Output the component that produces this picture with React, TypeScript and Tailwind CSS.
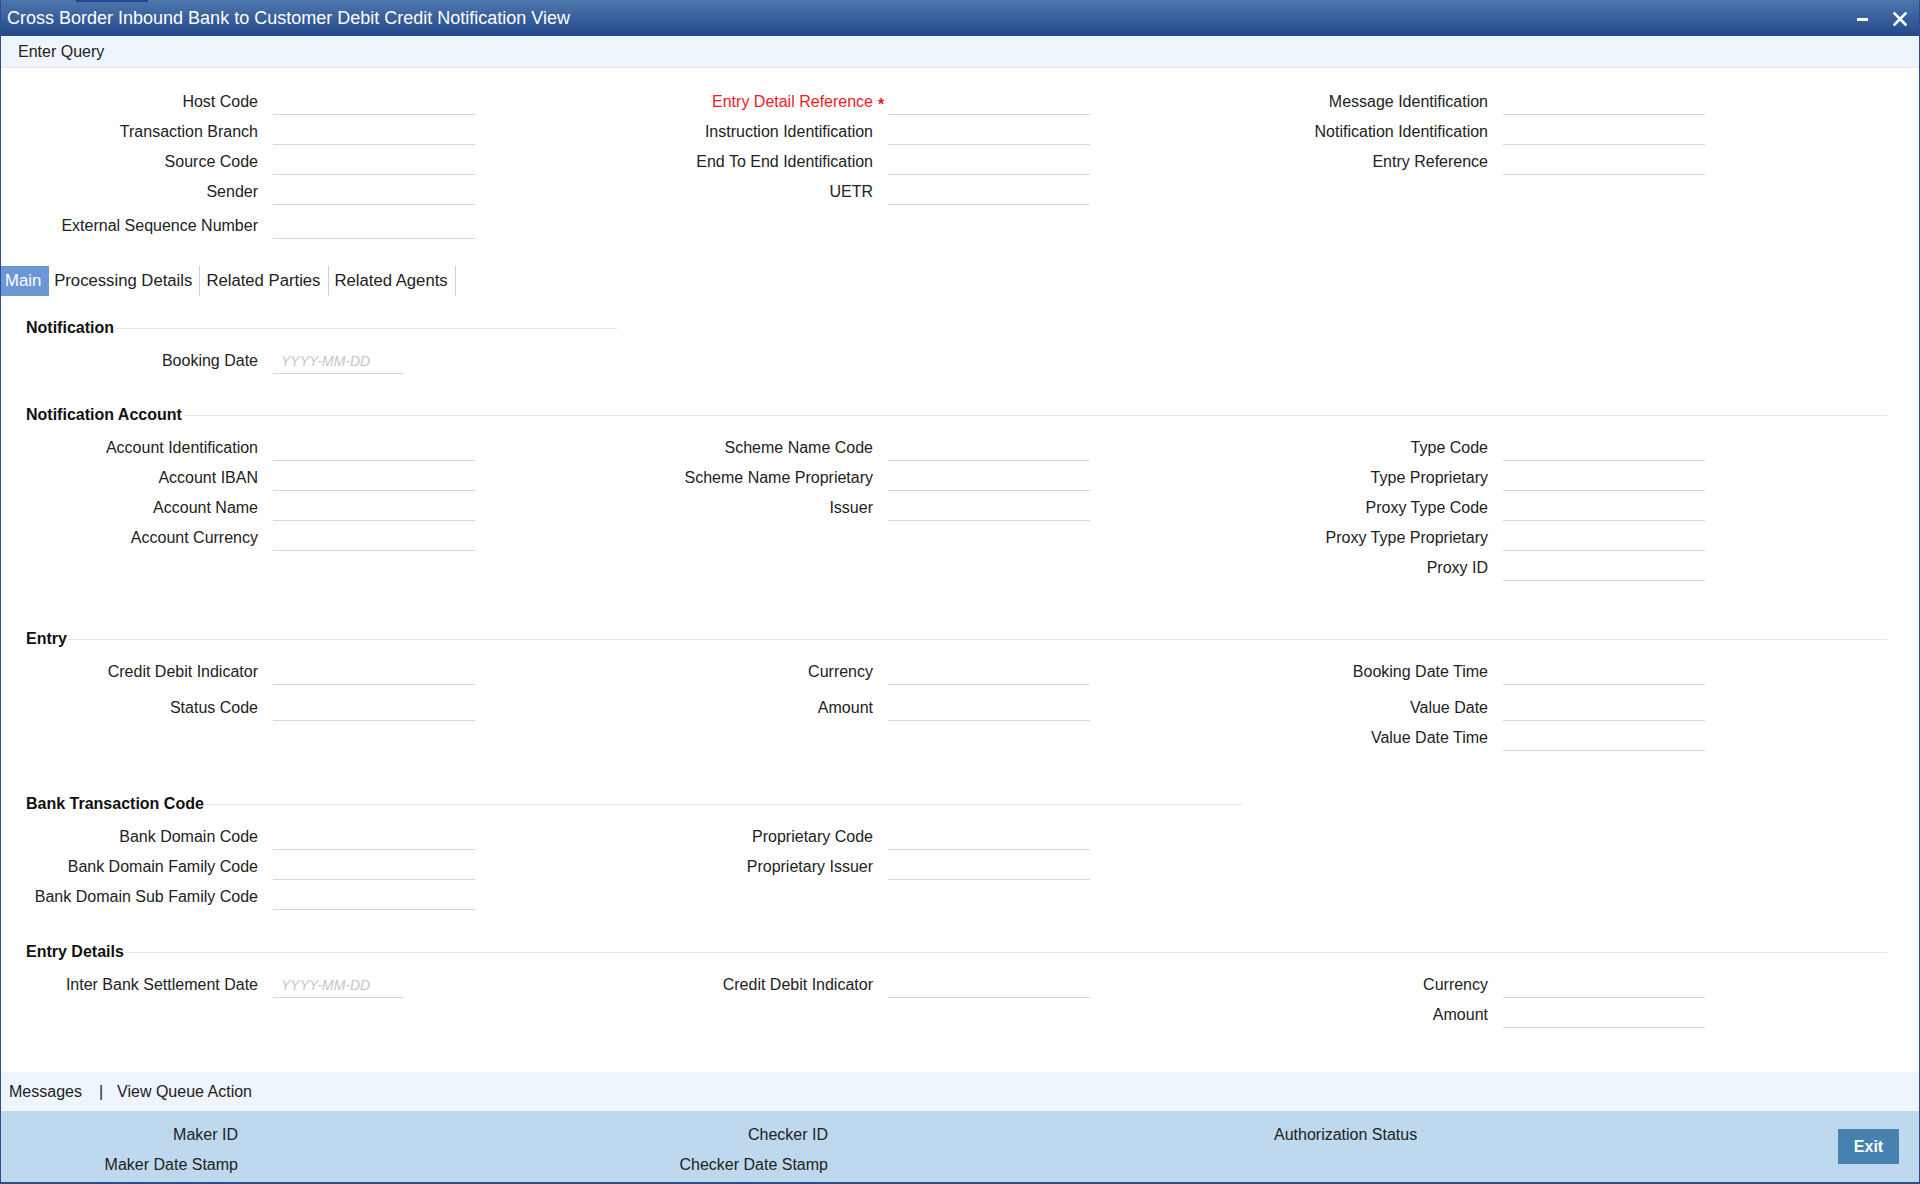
import React from "react";

type Field = { label: string; req?: boolean; date?: boolean } | null;
type Row = { h: 30 | 34 | 36; cells: Field[] };

const H: Record<number, string> = { 30: "h-[30px]", 34: "h-[34px]", 36: "h-[36px]" };

function Cell({ f }: { f: Field }) {
  if (!f) return <div className="w-[615px] shrink-0" />;
  return (
    <div className="w-[615px] shrink-0 flex items-start">
      <div
        className={`w-[257px] shrink-0 h-[26px] leading-[26px] text-right text-[16px] whitespace-nowrap ${
          f.req ? "text-[#f01a24]" : "text-[#222222]"
        }`}
      >
        <span className="relative">
          {f.label}
          {f.req && <span className="absolute left-[calc(100%+5px)] top-[-1px] font-bold">*</span>}
        </span>
      </div>
      <div
        className={`ml-[15px] h-[26px] border-b border-[#d6d6d6] ${f.date ? "w-[130px]" : "w-[202px]"}`}
      >
        {f.date && (
          <span className="block pl-[8px] italic text-[14px] leading-[26px] text-[#c6c6c6]">YYYY-MM-DD</span>
        )}
      </div>
    </div>
  );
}

function Rows({ rows }: { rows: Row[] }) {
  return (
    <div className="flex flex-col">
      {rows.map((r, i) => (
        <div key={i} className={`flex ${H[r.h]}`}>
          {r.cells.map((c, j) => (
            <Cell key={j} f={c} />
          ))}
        </div>
      ))}
    </div>
  );
}

function Header({ title, w, mt }: { title: string; w: string; mt: string }) {
  return (
    <div className={`h-[20px] flex items-center pl-[25px] ${w} ${mt}`}>
      <span className="font-bold text-[16px] leading-[20px] text-[#111111] whitespace-nowrap">{title}</span>
      <div className="flex-1 h-px bg-[#e8e8e8] ml-[2px]" />
    </div>
  );
}

const L = (label: string, extra: Partial<{ req: boolean; date: boolean }> = {}): Field => ({ label, ...extra });

const headerRows: Row[] = [
  { h: 30, cells: [L("Host Code"), L("Entry Detail Reference", { req: true }), L("Message Identification")] },
  { h: 30, cells: [L("Transaction Branch"), L("Instruction Identification"), L("Notification Identification")] },
  { h: 30, cells: [L("Source Code"), L("End To End Identification"), L("Entry Reference")] },
  { h: 34, cells: [L("Sender"), L("UETR"), null] },
  { h: 30, cells: [L("External Sequence Number"), null, null] },
];

const notifRows: Row[] = [{ h: 30, cells: [L("Booking Date", { date: true }), null, null] }];

const accRows: Row[] = [
  { h: 30, cells: [L("Account Identification"), L("Scheme Name Code"), L("Type Code")] },
  { h: 30, cells: [L("Account IBAN"), L("Scheme Name Proprietary"), L("Type Proprietary")] },
  { h: 30, cells: [L("Account Name"), L("Issuer"), L("Proxy Type Code")] },
  { h: 30, cells: [L("Account Currency"), null, L("Proxy Type Proprietary")] },
  { h: 30, cells: [null, null, L("Proxy ID")] },
];

const entryRows: Row[] = [
  { h: 36, cells: [L("Credit Debit Indicator"), L("Currency"), L("Booking Date Time")] },
  { h: 30, cells: [L("Status Code"), L("Amount"), L("Value Date")] },
  { h: 30, cells: [null, null, L("Value Date Time")] },
];

const btcRows: Row[] = [
  { h: 30, cells: [L("Bank Domain Code"), L("Proprietary Code"), null] },
  { h: 30, cells: [L("Bank Domain Family Code"), L("Proprietary Issuer"), null] },
  { h: 30, cells: [L("Bank Domain Sub Family Code"), null, null] },
];

const edRows: Row[] = [
  { h: 30, cells: [L("Inter Bank Settlement Date", { date: true }), L("Credit Debit Indicator"), L("Currency")] },
  { h: 30, cells: [null, null, L("Amount")] },
];

export default function App() {
  return (
    <div className="w-[1920px] h-[1184px] flex flex-col bg-white font-['Liberation_Sans',Arial,sans-serif] text-[#222222] overflow-hidden border-x border-b-2 border-[#2a4e8c]">
      {/* Title bar */}
      <div className="relative h-[36px] shrink-0 flex items-center pl-[6px] bg-gradient-to-b from-[#4e77ae] to-[#244889] text-white">
        <div className="absolute top-0 left-[75px] w-[72px] h-[2px] bg-[#1d4894]" />
        <span className="text-[18px] leading-[22px] whitespace-nowrap">
          Cross Border Inbound Bank to Customer Debit Credit Notification View
        </span>
        <div className="ml-auto flex items-center mr-[12px]">
          <div className="w-[11px] h-[3px] bg-white mt-[3px]" />
          <svg className="ml-[25px] mt-[2px]" width="14" height="14" viewBox="0 0 14 14">
            <path d="M1.5 1.5 L12.5 12.5 M12.5 1.5 L1.5 12.5" stroke="white" strokeWidth="2.6" strokeLinecap="square" />
          </svg>
        </div>
      </div>

      {/* Enter Query bar */}
      <div className="h-[32px] shrink-0 flex items-center pl-[17px] bg-[#eef5fd] border-b border-[#e2e8ef] text-[16px]">
        Enter Query
      </div>

      {/* Content */}
      <div className="flex-1 flex flex-col">
        <div className="mt-[21px]">
          <Rows rows={headerRows} />
        </div>

        {/* Tabs */}
        <div className="mt-[23px] h-[30px] flex text-[16.7px] whitespace-nowrap">
          <div className="h-full flex items-center pl-[4px] pr-[8px] bg-[#6c97d5] text-white">Main</div>
          <div className="h-full flex items-center pl-[5px] pr-[7px] border-r border-[#d0d0d0]">Processing Details</div>
          <div className="h-full flex items-center pl-[6px] pr-[8px] border-r border-[#d0d0d0]">Related Parties</div>
          <div className="h-full flex items-center pl-[5px] pr-[7px] border-r border-[#d0d0d0]">Related Agents</div>
        </div>

        <Header title="Notification" w="w-[616px]" mt="mt-[22px]" />
        <div className="mt-[10px]">
          <Rows rows={notifRows} />
        </div>

        <Header title="Notification Account" w="w-[1886px]" mt="mt-[27px]" />
        <div className="mt-[10px]">
          <Rows rows={accRows} />
        </div>

        <Header title="Entry" w="w-[1886px]" mt="mt-[44px]" />
        <div className="mt-[10px]">
          <Rows rows={entryRows} />
        </div>

        <Header title="Bank Transaction Code" w="w-[1242px]" mt="mt-[39px]" />
        <div className="mt-[10px]">
          <Rows rows={btcRows} />
        </div>

        <Header title="Entry Details" w="w-[1886px]" mt="mt-[28px]" />
        <div className="mt-[10px]">
          <Rows rows={edRows} />
        </div>
      </div>

      {/* Messages bar */}
      <div className="h-[39px] shrink-0 flex items-center pl-[8px] bg-[#eef5fd] text-[16px] whitespace-nowrap">
        <span>Messages</span>
        <span className="ml-[17px]">|</span>
        <span className="ml-[14px]">View Queue Action</span>
      </div>

      {/* Footer */}
      <div className="h-[71px] shrink-0 flex bg-[#bed9ed] text-[16px] whitespace-nowrap">
        <div className="w-[237px] pt-[9px] flex flex-col text-right">
          <div className="h-[30px] leading-[30px]">Maker ID</div>
          <div className="h-[30px] leading-[30px]">Maker Date Stamp</div>
        </div>
        <div className="w-[590px] pt-[9px] flex flex-col text-right">
          <div className="h-[30px] leading-[30px]">Checker ID</div>
          <div className="h-[30px] leading-[30px]">Checker Date Stamp</div>
        </div>
        <div className="ml-[446px] pt-[9px] flex flex-col">
          <div className="h-[30px] leading-[30px]">Authorization Status</div>
        </div>
        <div className="ml-auto mr-[20px] mt-[18px]">
          <button className="w-[61px] h-[35px] bg-[#4682b0] text-white font-bold text-[16px]">Exit</button>
        </div>
      </div>
    </div>
  );
}
